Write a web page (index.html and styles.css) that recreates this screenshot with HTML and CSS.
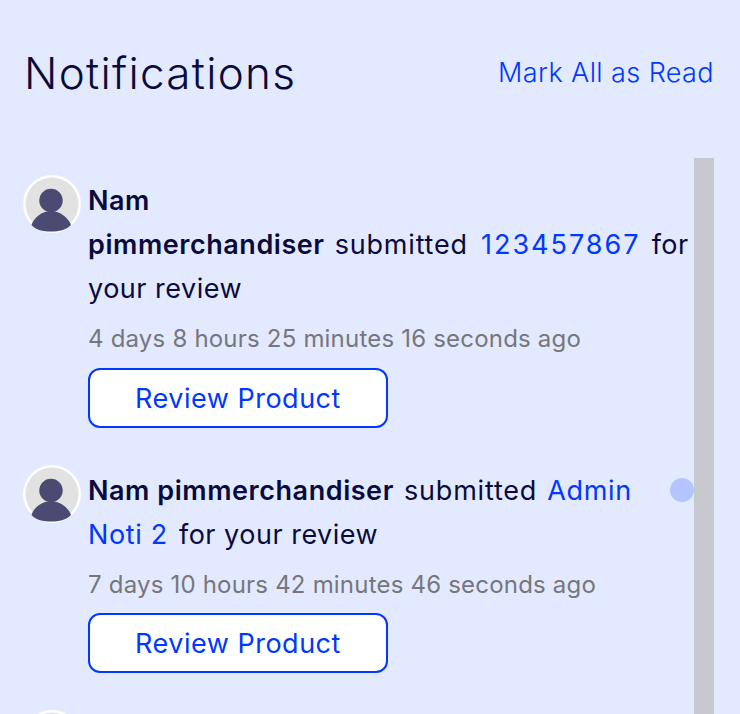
FILE: index.html
```html
<!DOCTYPE html>
<html lang="en">
<head>
<meta charset="utf-8">
<title>Notifications</title>
<link rel="stylesheet" href="styles.css">
</head>
<body>
<main class="panel">
  <header class="head">
    <h1 class="title">Notifications</h1>
    <a class="mark" href="#">Mark All as Read</a>
  </header>
  <div class="scroller">
    <ul class="list">
      <li class="item">
        <svg class="avatar" viewBox="0 0 58 58"><circle cx="29" cy="29" r="29" fill="#fff"/><circle cx="29" cy="29" r="26.5" fill="#e2e2e2"/><circle cx="28" cy="25.5" r="11.7" fill="#4a4a72"/><path d="M8.5 50 C11 42 20 36 28 36 C36 36 45 42 48 50 C43 55 36 56.5 28 56.5 C20 56.5 13 55 8.5 50Z" fill="#4a4a72"/></svg>
        <div class="body">
          <p class="msg"><b>Nam<br>pimmerchandiser</b> <span class="verb">submitted</span> <a class="num" href="#">123457867</a> for your review</p>
          <p class="time">4 days 8 hours 25 minutes 16 seconds ago</p>
          <button class="btn">Review Product</button>
        </div>
      </li>
      <li class="item">
        <svg class="avatar" viewBox="0 0 58 58"><circle cx="29" cy="29" r="29" fill="#fff"/><circle cx="29" cy="29" r="26.5" fill="#e2e2e2"/><circle cx="28" cy="25.5" r="11.7" fill="#4a4a72"/><path d="M8.5 50 C11 42 20 36 28 36 C36 36 45 42 48 50 C43 55 36 56.5 28 56.5 C20 56.5 13 55 8.5 50Z" fill="#4a4a72"/></svg>
        <div class="body">
          <p class="msg"><b>Nam pimmerchandiser</b> <span class="verb">submitted</span> <a href="#">Admin Noti 2</a> for your review</p>
          <p class="time">7 days 10 hours 42 minutes 46 seconds ago</p>
          <button class="btn">Review Product</button>
        </div>
        <span class="dot"></span>
      </li>
      <li class="item">
        <svg class="avatar" viewBox="0 0 58 58"><circle cx="29" cy="29" r="29" fill="#fff"/><circle cx="29" cy="29" r="26.5" fill="#e2e2e2"/><circle cx="28" cy="25.5" r="11.7" fill="#4a4a72"/></svg>
      </li>
    </ul>
  </div>
</main>
</body>
</html>
```
FILE: styles.css
```css
html, body {
  margin: 0;
  height: 100%;
  overflow: hidden;
  background: #e3eaff;
}
body {
  font-family: Inter, "Liberation Sans", sans-serif;
  color: #0a0a3c;
}
.panel {
  display: flex;
  flex-direction: column;
  height: 714px;
  padding: 0 26px 0 23px;
  box-sizing: border-box;
}
.head {
  display: flex;
  justify-content: space-between;
  align-items: center;
  height: 158px;
  padding-bottom: 12px;
  box-sizing: border-box;
  margin-left: 1px;
}
.title {
  margin: 0;
  font-size: 44px;
  font-weight: 300;
  line-height: 60px;
  letter-spacing: 1.28px;
}
.mark {
  color: #0038ff;
  font-size: 27px;
  font-weight: 350;
  line-height: 32px;
  text-decoration: none;
  letter-spacing: 0.4px;
}
.scroller {
  flex: 1;
  min-height: 0;
  overflow: hidden;
  border-right: 20px solid #c8c8cf;
}
.list {
  list-style: none;
  margin: 0;
  padding: 17px 0 0;
}
.item {
  display: flex;
  gap: 7px;
  margin-bottom: 37px;
  position: relative;
}
.avatar {
  width: 58px;
  height: 58px;
  flex: none;
}
.body {
  flex: 1;
  min-width: 0;
}
.msg {
  margin: 0;
  font-size: 27px;
  line-height: 44px;
  letter-spacing: 0.5px;
  padding-top: 4px;
}
.msg b {
  font-weight: 600;
  letter-spacing: 0.55px;
}
.msg a {
  color: #0038ff;
  text-decoration: none;
  margin: 0 3px 0 0;
  letter-spacing: 0.65px;
}
.verb {
  margin: 0 2px;
  letter-spacing: 0.8px;
}
.msg .num {
  letter-spacing: 2px;
  margin: 0 3px 0 3px;
}
.time {
  margin: 6px 0 0;
  font-size: 24px;
  line-height: 44px;
  color: #76767c;
  letter-spacing: 0.2px;
}
.btn {
  display: block;
  margin-top: 7px;
  width: 300px;
  height: 60px;
  background: #fff;
  border: 2px solid #0038ff;
  border-radius: 12px;
  color: #0038ff;
  font: 400 27px Inter, "Liberation Sans", sans-serif;
  letter-spacing: 0.5px;
}
.item + .item .btn {
  margin-top: 6px;
}
.dot {
  position: absolute;
  right: 0;
  top: 13px;
  width: 24px;
  height: 24px;
  border-radius: 50%;
  background: #b3c5ff;
}
```
